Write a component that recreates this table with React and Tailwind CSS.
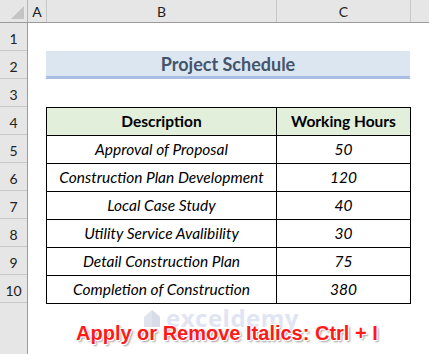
import React from 'react';

const rows = [
  ['Approval of Proposal', '50'],
  ['Construction Plan Development', '120'],
  ['Local Case Study', '40'],
  ['Utility Service Avalibility', '30'],
  ['Detail Construction Plan', '75'],
  ['Completion of Construction', '380'],
];

const calibri = { fontFamily: 'Lato, "Open Sans", sans-serif' };

export default function App() {
  return (
    <div className="w-[429px] h-[354px] overflow-hidden bg-white relative" style={calibri}>
      {/* column headers */}
      <div className="flex h-[23px] bg-[#e6e6e6] border-b border-[#9b9b9b] text-[14px] text-[#222]">
        <div className="w-[28px] border-r border-[#b5b5b5] flex items-end justify-end p-[3px]">
          <div className="w-0 h-0 border-l-[13px] border-l-transparent border-b-[13px] border-b-[#c4c4c4]" />
        </div>
        <div className="w-[19px] border-r border-[#c8c8c8] flex items-center justify-center">A</div>
        <div className="w-[230px] border-r border-[#c8c8c8] flex items-center justify-center">B</div>
        <div className="w-[134px] border-r border-[#c8c8c8] flex items-center justify-center">C</div>
        <div className="flex-1" />
      </div>

      <div className="flex h-[331px]">
        {/* row headers */}
        <div className="w-[28px] bg-[#e6e6e6] border-r border-[#9b9b9b] flex flex-col text-[14px] text-[#222]">
          {[1, 2, 3, 4, 5, 6, 7, 8, 9, 10].map((n) => (
            <div key={n} className="h-[28px] border-b border-[#c8c8c8] flex items-center justify-center pt-[3px]">
              {n}
            </div>
          ))}
          <div className="flex-1" />
        </div>

        {/* sheet */}
        <div className="flex-1 flex flex-col pl-[18px]">
          <div className="h-[28px]" />
          <div className="h-[28px] w-[364px] bg-[#dce6f1] border-b-[3px] border-[#a9bde3] flex items-center justify-center text-[18px] font-bold text-[#44546a] pt-[1px]">
            Project Schedule
          </div>
          <div className="h-[28px]" />
          <div className="w-[365px] border border-black flex flex-col text-[15.5px] text-black">
            <div className="flex h-[27px] bg-[#e2efda] font-bold text-[15.5px]">
              <div className="w-[230px] border-r border-black flex items-center justify-center">Description</div>
              <div className="flex-1 flex items-center justify-center">Working Hours</div>
            </div>
            {rows.map(([d, h]) => (
              <div key={d} className="flex h-[28px] border-t border-black italic">
                <div className="w-[230px] border-r border-black flex items-center justify-center">{d}</div>
                <div className="flex-1 flex items-center justify-center">{h}</div>
              </div>
            ))}
          </div>
          <div className="relative h-[50px] ml-[30px] flex items-center">
            {/* watermark */}
            <div className="absolute left-[66px] top-[2px] flex items-center gap-[4px] opacity-30">
              <svg width="20" height="20" viewBox="0 0 20 20">
                <path d="M2 9 L10 2 L18 9 L18 19 L2 19 Z" fill="#9aa7c8" />
                <path d="M10 2 L18 9 L18 19 L10 19 Z" fill="#7f8fb8" />
              </svg>
              <span className="text-[24px] font-bold text-[#9aa9d8] leading-none tracking-[0.5px]" style={{ fontFamily: '"Open Sans", sans-serif' }}>
                exceldemy
              </span>
            </div>
            <div
              className="relative mt-[8px] text-[20px] font-bold text-[#ff1a1a] [text-shadow:1px_0_0_#fff,-1px_0_0_#fff,0_1px_0_#fff,0_-1px_0_#fff,1px_1px_0_#fff,-1px_-1px_0_#fff,2px_2px_2px_#9a9a9a]"
              style={{ fontFamily: '"Liberation Sans", Arial, sans-serif' }}
            >
              Apply or Remove Italics: Ctrl + I
            </div>
          </div>
        </div>
      </div>
    </div>
  );
}
